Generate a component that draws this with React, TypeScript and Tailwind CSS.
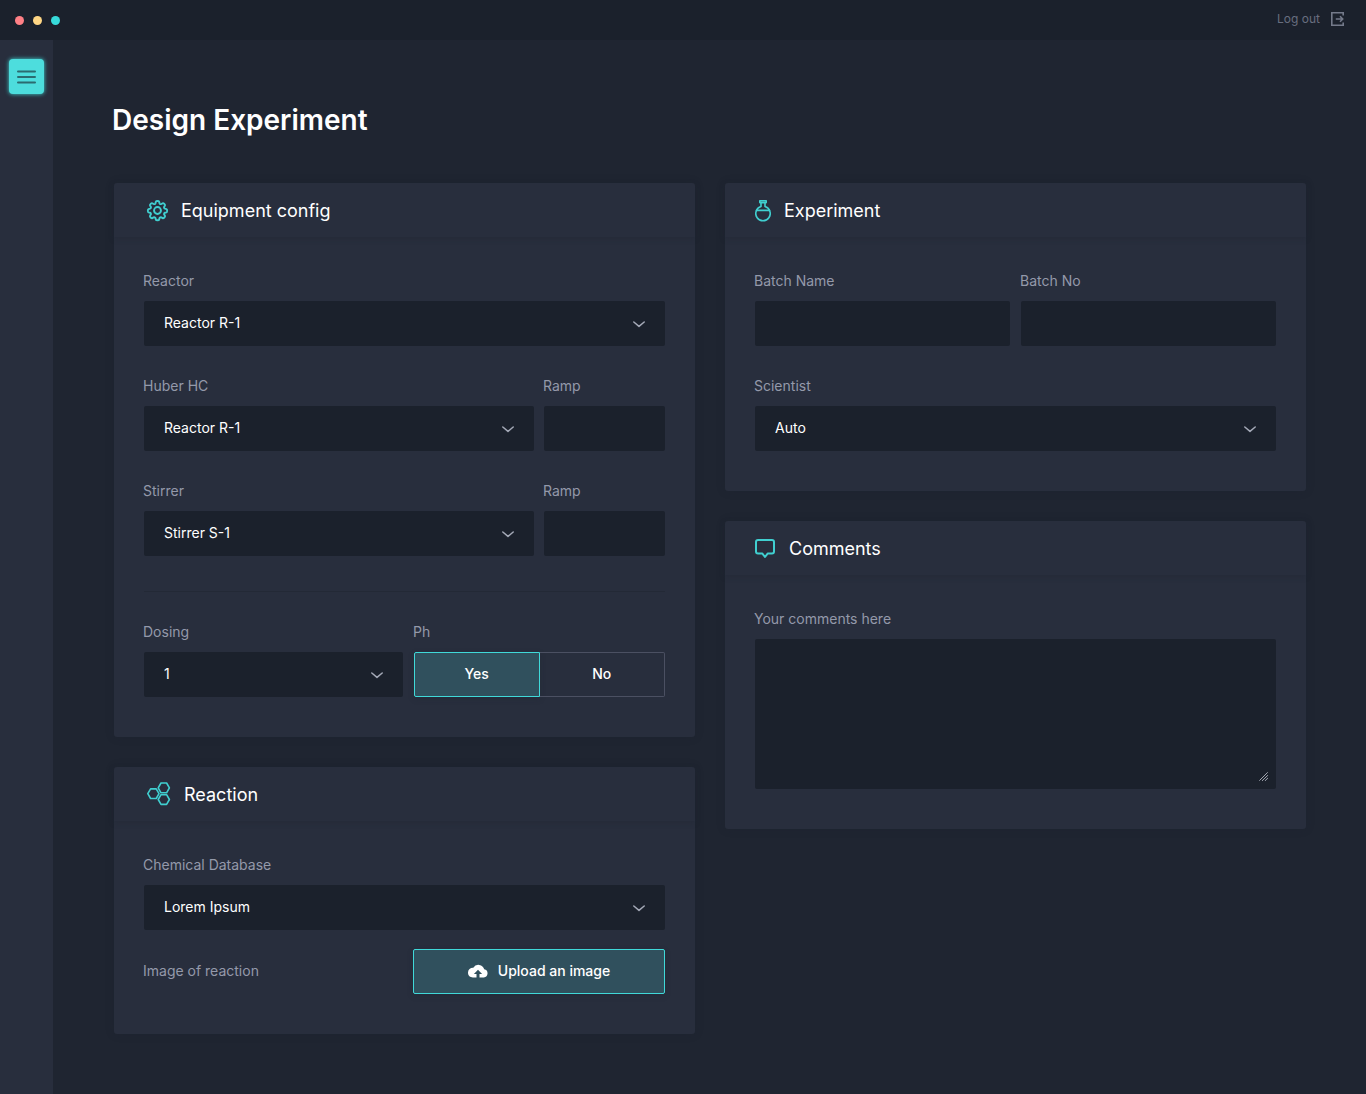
import { useId, useState, type ReactNode } from "react";

const fieldClass =
  "block h-[45px] w-full rounded-xs bg-[#1b212c] px-5 pb-0.5 text-sm text-white outline-none focus:ring-1 focus:ring-[#40d9d9]";

function Field({ label, children }: { label: string; children: (id: string) => ReactNode }) {
  const id = useId();
  return (
    <div className="flex min-w-0 flex-col gap-2.5">
      <label htmlFor={id} className="-ml-px self-start text-sm text-[#9499aa]">
        {label}
      </label>
      {children(id)}
    </div>
  );
}

function SelectField({ label, options }: { label: string; options: string[] }) {
  return (
    <Field label={label}>
      {(id) => (
        <div className="relative">
          <select id={id} className={`${fieldClass} appearance-none pr-12`}>
            {options.map((option) => (
              <option key={option}>{option}</option>
            ))}
          </select>
          <svg
            className="pointer-events-none absolute top-5 right-5"
            width="12"
            height="8"
            viewBox="0 0 12 8"
            fill="none"
            stroke="#a4a9b7"
            strokeWidth="1.5"
            strokeLinecap="round"
            strokeLinejoin="round"
            aria-hidden="true"
          >
            <path d="M.8 1 6 5.400l5.200-4.400" />
          </svg>
        </div>
      )}
    </Field>
  );
}

function TextField({ label }: { label: string }) {
  return <Field label={label}>{(id) => <input id={id} type="text" className={fieldClass} />}</Field>;
}

function Card({ title, icon, children }: { title: string; icon: ReactNode; children: ReactNode }) {
  return (
    <section className="rounded-[3px] bg-[#282e3d] shadow-[0_0_10px_rgba(27,33,44,0.15)]">
      <header className="flex h-[54px] items-center px-[30px] pt-0.5 shadow-[0_2px_5px_rgba(32,37,50,0.35)]">
        {icon}
        <h2 className="text-lg text-white">{title}</h2>
      </header>
      <div className="flex flex-col gap-[30px] px-[30px] pt-[34px] pb-10">{children}</div>
    </section>
  );
}

const iconProps = {
  fill: "none",
  stroke: "#40cfd0",
  strokeLinejoin: "round" as const,
  strokeLinecap: "round" as const,
  "aria-hidden": true,
};

function GearIcon() {
  return (
    <svg className="mr-3 mb-0.5 ml-0.5" width="23" height="23" viewBox="0 0 24 24" strokeWidth="2" {...iconProps}>
      <circle cx="12" cy="12" r="3.600" />
      <path d="M10.300 2.900c.3-1 3.100-1 3.400 0l.4 1.500c.3.900 1.200 1.200 2 .8l1.300-.8c.9-.5 2.900 1.500 2.400 2.400l-.8 1.300c-.4.800-.1 1.700.8 2l1.500.4c1 .3 1 3.100 0 3.400l-1.500.4c-.9.300-1.200 1.200-.8 2l.8 1.300c.5.900-1.500 2.900-2.400 2.400l-1.300-.8c-.8-.4-1.700-.1-2 .8l-.4 1.500c-.3 1-3.100 1-3.400 0l-.4-1.500c-.3-.9-1.200-1.200-2-.8l-1.300.8c-.9.500-2.900-1.500-2.400-2.400l.8-1.300c.4-.8.1-1.700-.8-2l-1.500-.4c-1-.3-1-3.100 0-3.400l1.500-.4c.9-.3 1.200-1.200.8-2l-.8-1.300c-.5-.9 1.500-2.900 2.400-2.400l1.300.8c.8.400 1.700.1 2-.8z" />
    </svg>
  );
}

function MoleculeIcon() {
  return (
    <svg className="mr-3 mb-0.5 ml-0.5" width="26" height="26" viewBox="0 0 26 26" strokeWidth="1.600" {...iconProps}>
      <path d="M4.600 7.900h5.600L13 12.700l-2.800 4.800H4.600l-2.800-4.800z" />
      <path d="M15 2h5.600l2.800 4.900-2.800 4.900H15l-2.800-4.900z" />
      <path d="M15 13.700h5.600l2.800 4.800-2.800 4.900H15l-2.800-4.900z" />
    </svg>
  );
}

function FlaskIcon() {
  return (
    <svg className="mr-[13px]" width="16" height="22" viewBox="0 0 16 22" strokeWidth="1.600" {...iconProps}>
      <path d="M4.800.8h6.400v1.800H4.800zM6 2.600v4a7.200 7.200 0 1 0 4 0v-4" />
      <path d="M1.400 10.400h13.200" />
    </svg>
  );
}

function CommentIcon() {
  return (
    <svg className="mr-3.5" width="20" height="20" viewBox="0 0 20 20" strokeWidth="2" {...iconProps}>
      <path d="M3 1h14a2 2 0 0 1 2 2v9.400a2 2 0 0 1-2 2h-4.200L10 18l-2.800-3.600H3a2 2 0 0 1-2-2V3a2 2 0 0 1 2-2z" />
    </svg>
  );
}

function PhToggle() {
  const [value, setValue] = useState("Yes");
  return (
    <div className="flex min-w-0 flex-col gap-2.5">
      <span id="ph-label" className="-ml-px text-sm text-[#9499aa]">
        Ph
      </span>
      <div role="group" aria-labelledby="ph-label" className="grid h-[45px] grid-cols-2">
        {["Yes", "No"].map((option) => (
          <button
            key={option}
            type="button"
            aria-pressed={value === option}
            onClick={() => setValue(option)}
            className={`border pb-0.5 text-sm font-medium text-white first:rounded-l-xs last:rounded-r-xs ${
              value === option
                ? "border-[#40d9d9] bg-[#30505d] shadow-[0_2px_6px_rgba(27,33,44,0.2)]"
                : "border-[#4b5062] first:border-r-0 last:border-l-0"
            }`}
          >
            {option}
          </button>
        ))}
      </div>
    </div>
  );
}

export default function App() {
  return (
    <div className="flex min-h-screen flex-col bg-[#1f2531] font-['Inter',sans-serif]">
      <header className="flex h-10 items-center justify-between bg-[#1b212c] pr-[22px] pl-[15px]">
        <div className="flex gap-[9px]">
          <span className="size-[9px] rounded-full bg-[#ff8086]" />
          <span className="size-[9px] rounded-full bg-[#ffd685]" />
          <span className="size-[9px] rounded-full bg-[#37dada]" />
        </div>
        <a href="#logout" className="flex items-center gap-[11px] pb-0.5 text-xs text-[#686e7f]">
          Log out
          <svg width="13" height="14" viewBox="0 0 13 14" fill="none" stroke="#747a8a" strokeWidth="1.600" aria-hidden="true">
            <path d="M12.200 3.500V.8H.8v12.400h11.400v-2.700" />
            <path d="M4.800 7h7M9 4.300 11.700 7 9 9.700" />
          </svg>
        </a>
      </header>

      <div className="flex flex-1">
        <aside className="w-[53px] shrink-0 bg-[#282e3d] px-[9px] pt-[19px]">
          <button
            type="button"
            aria-label="Menu"
            className="flex size-[35px] items-center justify-center rounded-[4px] bg-[#4ddddd] shadow-[0_0_4px_#40d9d9]"
          >
            <svg width="19" height="14" viewBox="0 0 19 14" stroke="#2b6b70" strokeWidth="2" strokeLinecap="round" aria-hidden="true">
              <path d="M1 1.500h17M1 7h17M1 12.500h17" />
            </svg>
          </button>
        </aside>

        <main className="min-w-0 flex-1 pt-[60px] pr-[60px] pb-[60px] pl-[61px]">
          <h1 className="-ml-0.5 text-[28px] leading-10 font-semibold text-white">Design Experiment</h1>

          <div className="mt-[43px] grid grid-cols-2 items-start gap-[30px]">
            <div className="flex flex-col gap-[30px]">
              <Card title="Equipment config" icon={<GearIcon />}>
                <SelectField label="Reactor" options={["Reactor R-1", "Reactor R-2"]} />
                <div className="grid grid-cols-[390fr_121fr] gap-2.5">
                  <SelectField label="Huber HC" options={["Reactor R-1", "Reactor R-2"]} />
                  <TextField label="Ramp" />
                </div>
                <div className="grid grid-cols-[390fr_121fr] gap-2.5">
                  <SelectField label="Stirrer" options={["Stirrer S-1", "Stirrer S-2"]} />
                  <TextField label="Ramp" />
                </div>
                <hr className="mt-[5px] border-[#232936]" />
                <div className="grid grid-cols-[259fr_251fr] gap-[11px]">
                  <SelectField label="Dosing" options={["1", "2", "3"]} />
                  <PhToggle />
                </div>
              </Card>

              <Card title="Reaction" icon={<MoleculeIcon />}>
                <SelectField label="Chemical Database" options={["Lorem Ipsum"]} />
                <div className="-mt-[11px] grid grid-cols-[259fr_252fr] items-center gap-2.5">
                  <span className="-ml-px pb-0.5 text-sm text-[#9499aa]">Image of reaction</span>
                  <button
                    type="button"
                    className="flex h-[45px] items-center justify-center gap-2.5 rounded-xs border border-[#40d9d9] bg-[#30505d] pb-0.5 text-sm font-medium text-white shadow-[0_2px_6px_rgba(27,33,44,0.2)]"
                  >
                    <svg width="20" height="14" viewBox="0 0 20 14" fill="#fff" aria-hidden="true">
                      <path d="M16.200 5.300A6 6 0 0 0 5.300 3.700 5 5 0 0 0 0 8.800C0 11.600 2.200 13.500 4.900 13.500H8.500V10H5.900L10 5.700l4.100 4.300h-2.600v3.500h4.300A4.150 4.150 0 0 0 16.200 5.300z" />
                    </svg>
                    Upload an image
                  </button>
                </div>
              </Card>
            </div>

            <div className="flex flex-col gap-[30px]">
              <Card title="Experiment" icon={<FlaskIcon />}>
                <div className="grid grid-cols-2 gap-[11px]">
                  <TextField label="Batch Name" />
                  <TextField label="Batch No" />
                </div>
                <SelectField label="Scientist" options={["Auto"]} />
              </Card>

              <Card title="Comments" icon={<CommentIcon />}>
                <Field label="Your comments here">
                  {(id) => (
                    <div className="relative">
                      <textarea
                        id={id}
                        className="block h-[150px] w-full resize-none rounded-xs bg-[#1b212c] px-5 py-3 text-sm text-white outline-none focus:ring-1 focus:ring-[#40d9d9]"
                      />
                      <svg
                        className="pointer-events-none absolute right-2 bottom-2"
                        width="9"
                        height="9"
                        viewBox="0 0 9 9"
                        stroke="#a3a7b2"
                        aria-hidden="true"
                      >
                        <path d="M.3 8.700 8.700.3M3 8.900 8.900 3.200M5.800 9 9 5.900" />
                      </svg>
                    </div>
                  )}
                </Field>
              </Card>
            </div>
          </div>
        </main>
      </div>
    </div>
  );
}
